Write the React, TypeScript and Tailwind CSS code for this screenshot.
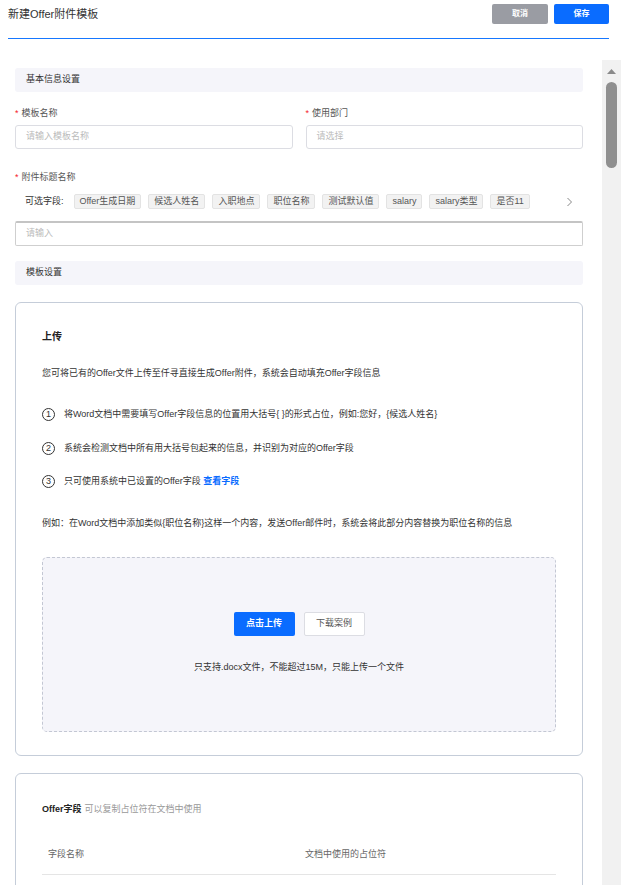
import React from "react";

const FONT = "font-['Liberation_Sans','Noto_Sans_CJK_SC',sans-serif]";

const fields = ["Offer生成日期", "候选人姓名", "入职地点", "职位名称", "测试默认值", "salary", "salary类型", "是否11"];

function SectionBar({ title }: { title: string }) {
  return (
    <div className="h-[24px] rounded-[3px] bg-[#f5f5fa] pl-[11px] flex items-center text-[9px] text-[#333]">{title}</div>
  );
}

function Label({ text }: { text: string }) {
  return (
    <div className="text-[9px] text-[#555] leading-[12px] flex items-center gap-[3px]">
      <span className="text-[#f5222d]">*</span>
      {text}
    </div>
  );
}

function Step({ n, children }: { n: number; children: React.ReactNode }) {
  return (
    <div className="flex items-center gap-[9px] text-[9px] text-[#333]">
      <span className="w-[13px] h-[13px] rounded-full border border-[#333] flex items-center justify-center text-[9px] leading-none">{n}</span>
      <span>{children}</span>
    </div>
  );
}

export default function App() {
  return (
    <div className={`w-[621px] h-[885px] overflow-hidden bg-white flex flex-col ${FONT}`}>
      {/* top bar */}
      <div className="h-[60px] shrink-0 pl-[8px] pr-[12px]">
        <div className="h-[39px] border-b border-[#1677ff] flex items-start justify-between pt-[4px]">
          <div className="text-[11px] text-[#333] leading-[20px]">新建Offer附件模板</div>
          <div className="flex gap-[6px]">
            <button className="w-[56px] h-[20px] rounded-[2px] bg-[#9a9ca3] text-white text-[8px] font-bold">取消</button>
            <button className="w-[55px] h-[20px] rounded-[2px] bg-[#0a6cff] text-white text-[8px] font-bold">保存</button>
          </div>
        </div>
      </div>

      <div className="flex-1 flex min-h-0">
        <div className="w-[602px] pl-[15px] pr-[19px] pt-[8px]">
          <SectionBar title="基本信息设置" />

          <div className="grid grid-cols-2 gap-x-[13px] mt-[15px]">
            <div>
              <Label text="模板名称" />
              <div className="mt-[6px] h-[24px] border border-[#dcdde3] rounded-[3px] pl-[10px] flex items-center text-[9px] text-[#bbb]">请输入模板名称</div>
            </div>
            <div>
              <Label text="使用部门" />
              <div className="mt-[6px] h-[24px] border border-[#dcdde3] rounded-[3px] pl-[10px] flex items-center text-[9px] text-[#bbb]">请选择</div>
            </div>
          </div>

          <div className="mt-[22px]">
            <Label text="附件标题名称" />
          </div>
          <div className="mt-[11px] flex items-center pl-[10px] text-[9px]">
            <span className="text-[#333] mr-[10px]">可选字段:</span>
            <div className="flex gap-[7px]">
              {fields.map((f) => (
                <span key={f} className="h-[15px] px-[5px] rounded-[2px] border border-[#e3e3e3] bg-[#f2f2f2] text-[#555] flex items-center">{f}</span>
              ))}
            </div>
            <svg className="ml-auto mr-[10px]" width="7" height="10" viewBox="0 0 7 10">
              <path d="M1.5 1 L5.5 5 L1.5 9" fill="none" stroke="#888" strokeWidth="1" />
            </svg>
          </div>
          <div className="mt-[12px] h-[25px] border border-[#cfcfcf] border-t-[2px] border-t-[#c4c4c4] rounded-[2px] pl-[10px] flex items-center text-[9px] text-[#bbb]">请输入</div>

          <div className="mt-[15px]">
            <SectionBar title="模板设置" />
          </div>

          {/* upload card */}
          <div className="mt-[17px] border border-[#c5cdd9] rounded-[6px] px-[26px] pt-[27px] pb-[23px]">
            <div className="text-[10px] font-bold text-[#222] leading-[14px]">上传</div>
            <div className="mt-[23px] text-[9px] text-[#333] leading-[12px]">您可将已有的Offer文件上传至仟寻直接生成Offer附件，系统会自动填充Offer字段信息</div>
            <div className="mt-[29px] flex flex-col gap-[20px]">
              <Step n={1}>将Word文档中需要填写Offer字段信息的位置用大括号{"{ }"}的形式占位，例如:您好，{"{候选人姓名}"}</Step>
              <Step n={2}>系统会检测文档中所有用大括号包起来的信息，并识别为对应的Offer字段</Step>
              <Step n={3}>
                只可使用系统中已设置的Offer字段 <span className="text-[#0a6cff] font-bold">查看字段</span>
              </Step>
            </div>
            <div className="mt-[28px] text-[9px] text-[#333] leading-[12px]">例如：在Word文档中添加类似{"{职位名称}"}这样一个内容，发送Offer邮件时，系统会将此部分内容替换为职位名称的信息</div>

            <div className="mt-[28px] h-[175px] rounded-[5px] border border-dashed border-[#c3c7d3] bg-[#f5f5fa] flex flex-col items-center pt-[54px]">
              <div className="flex gap-[9px]">
                <button className="w-[61px] h-[24px] rounded-[2px] bg-[#0a6cff] text-white text-[9px] font-bold">点击上传</button>
                <button className="w-[61px] h-[24px] rounded-[2px] bg-white border border-[#dcdde3] text-[#555] text-[9px]">下载案例</button>
              </div>
              <div className="mt-[25px] text-[9px] text-[#333]">只支持.docx文件，不能超过15M，只能上传一个文件</div>
            </div>
          </div>

          {/* field card */}
          <div className="mt-[17px] border border-[#c5cdd9] rounded-[6px] px-[26px] pt-[29px] pb-[20px]">
            <div className="text-[9px] leading-[12px]">
              <span className="text-[#222] font-bold">Offer字段</span>
              <span className="text-[#999] ml-[3px]">可以复制占位符在文档中使用</span>
            </div>
            <div className="mt-[21px] grid grid-cols-2 border-b border-[#e5e5e5] h-[39px] items-center text-[9px] text-[#666]">
              <span className="pl-[6px]">字段名称</span>
              <span className="pl-[6px]">文档中使用的占位符</span>
            </div>
          </div>
        </div>

        {/* scrollbar */}
        <div className="w-[19px] bg-[#f1f1f1] flex flex-col items-center pt-[9px]">
          <svg width="9" height="5" viewBox="0 0 9 5">
            <path d="M0 5 L4.5 0 L9 5 Z" fill="#8a8a8a" />
          </svg>
          <div className="mt-[8px] w-[11px] h-[86px] rounded-full bg-[#8f8f8f]" />
        </div>
      </div>
    </div>
  );
}
